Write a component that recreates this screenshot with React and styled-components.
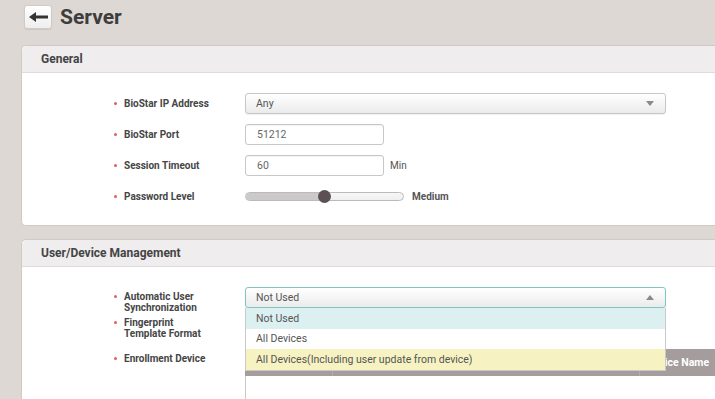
import React from "react";
import styled, { createGlobalStyle } from "styled-components";

const GlobalStyle = createGlobalStyle`
  html, body {
    margin: 0;
    overflow: hidden;
    background: #ddd8d4;
  }
  body {
    font-family: Roboto, "Liberation Sans", Arial, sans-serif;
    color: #444;
  }
`;

const Page = styled.div`
  width: 780px;
  padding: 5px 0 0 21px;
  box-sizing: border-box;
`;

const TitleBar = styled.div`
  display: flex;
  align-items: center;
  gap: 8px;
  height: 24px;
  padding-left: 3px;
  margin-bottom: 16px;
`;

const BackButton = styled.button`
  width: 28px;
  height: 24px;
  padding: 0;
  display: flex;
  align-items: center;
  justify-content: center;
  border: 1px solid #cfcbc8;
  border-radius: 3px;
  background: linear-gradient(#ffffff, #eeeeee);
  box-shadow: 0 1px 1px rgba(0, 0, 0, 0.08);
`;

const Title = styled.h1`
  margin: 0;
  font-size: 21px;
  font-weight: 700;
  color: #3d3d3d;
  line-height: 24px;
`;

const Panel = styled.section`
  background: #fff;
  border: 1px solid #cfcac7;
  border-right: none;
  border-radius: 5px 0 0 5px;
  margin-bottom: 13px;
`;

const PanelHeader = styled.div`
  height: 26px;
  padding-left: 19px;
  display: flex;
  align-items: center;
  background: #efedee;
  border-bottom: 1px solid #dedbda;
  border-radius: 5px 0 0 0;
  font-size: 12px;
  font-weight: 700;
  color: #444;
`;

const PanelBody = styled.div`
  padding: 20px 0 ${(p) => p.$bottom}px 92px;
  display: flex;
  flex-direction: column;
  gap: ${(p) => p.$gap}px;
`;

const Row = styled.div`
  display: grid;
  grid-template-columns: 131px auto;
  align-items: ${(p) => (p.$top ? "start" : "center")};
  margin-top: ${(p) => p.$space || 0}px;
`;

const Label = styled.div`
  display: flex;
  font-size: 10px;
  font-weight: 700;
  line-height: 11px;
  color: #454545;
  padding-top: ${(p) => (p.$top ? 4 : 0)}px;
`;

const LabelText = styled.span`
  white-space: ${(p) => (p.$wrap ? "normal" : "nowrap")};
  max-width: ${(p) => (p.$wrap ? "84px" : "none")};
`;

const Dot = styled.span`
  flex: none;
  width: 3px;
  height: 3px;
  border-radius: 50%;
  background: #e0605f;
  margin: 4px 7px 0 0;
`;

const Control = styled.div`
  display: flex;
  align-items: center;
  min-height: 21px;
  gap: ${(p) => p.$gap || 6}px;
  position: relative;
`;

const SelectBox = styled.div`
  width: 421px;
  height: 21px;
  box-sizing: border-box;
  display: flex;
  align-items: center;
  justify-content: space-between;
  padding: 0 11px 0 10px;
  border: 1px solid ${(p) => (p.$open ? "#80c6c0" : "#c9c7c6")};
  border-radius: 3px;
  background: linear-gradient(#ffffff, #ebebeb);
  box-shadow: 0 1px 1px rgba(0, 0, 0, 0.06);
  font-size: 10.5px;
  color: #555;
`;

const Caret = styled.span`
  width: 0;
  height: 0;
  border-left: 4px solid transparent;
  border-right: 4px solid transparent;
  ${(p) =>
    p.$up ? "border-bottom: 5px solid #8a8a8a;" : "border-top: 5px solid #8a8a8a;"}
`;

const TextInput = styled.div`
  width: 139px;
  height: 21px;
  box-sizing: border-box;
  display: flex;
  align-items: center;
  padding-left: 11px;
  border: 1px solid #c9c7c6;
  border-radius: 3px;
  background: #fff;
  box-shadow: inset 0 1px 1px rgba(0, 0, 0, 0.05);
  font-size: 10.5px;
  color: #666;
`;

const Unit = styled.span`
  font-size: 10px;
  color: #555;
  font-weight: ${(p) => (p.$bold ? 700 : 400)};
`;

const Track = styled.div`
  position: relative;
  width: 159px;
  height: 9px;
  box-sizing: border-box;
  border: 1px solid #bdbbba;
  border-radius: 5px;
  background: linear-gradient(#f7f7f7, #efefef);
`;

const TrackFill = styled.div`
  height: 100%;
  border-radius: 5px 0 0 5px;
  background: #cbc9c9;
`;

const Thumb = styled.span`
  position: absolute;
  top: 50%;
  width: 13px;
  height: 13px;
  margin: -6.5px 0 0 -6.5px;
  border-radius: 50%;
  background: #5b5055;
`;

const Menu = styled.ul`
  position: absolute;
  top: 21px;
  left: 0;
  width: 421px;
  box-sizing: border-box;
  margin: 0;
  padding: 0;
  list-style: none;
  background: #fff;
  border: 1px solid #cbc9c8;
  border-top: none;
  z-index: 5;
`;

const MenuItem = styled.li`
  height: 20.5px;
  display: flex;
  align-items: center;
  padding-left: 10px;
  font-size: 10.5px;
  color: #555;
  background: ${(p) => p.$bg || "#fff"};
`;

const Table = styled.div`
  width: 470px;
`;

const TableHead = styled.div`
  display: grid;
  grid-template-columns: 87px 307px auto;
  height: 27px;
  background: #a49c9d;
`;

const HeadCell = styled.div`
  display: flex;
  align-items: center;
  padding-left: 7px;
  font-size: 10.5px;
  font-weight: 700;
  color: #fff;
  white-space: nowrap;
  border-left: ${(p) => (p.$first ? "none" : "1px solid #b3acad")};
`;

const TableBody = styled.div`
  height: 40px;
  border-left: 1px solid #cbc9c8;
`;

function BackArrow() {
  return (
    <svg width="19" height="10" viewBox="0 0 19 10">
      <polygon points="0,5 7,0 7,10" fill="#333" />
      <rect x="6" y="3.5" width="13" height="3" fill="#333" />
    </svg>
  );
}

function Field({ label, top, space, children, gap }) {
  return (
    <Row $top={top} $space={space}>
      <Label $top={top}>
        <Dot />
        <LabelText $wrap={top}>{label}</LabelText>
      </Label>
      <Control $gap={gap}>{children}</Control>
    </Row>
  );
}

export default function App() {
  const level = 0.5;
  return (
    <>
      <GlobalStyle />
      <Page>
        <TitleBar>
          <BackButton>
            <BackArrow />
          </BackButton>
          <Title>Server</Title>
        </TitleBar>

        <Panel>
          <PanelHeader>General</PanelHeader>
          <PanelBody $gap={10} $bottom={18}>
            <Field label="BioStar IP Address">
              <SelectBox>
                <span>Any</span>
                <Caret />
              </SelectBox>
            </Field>
            <Field label="BioStar Port">
              <TextInput>51212</TextInput>
            </Field>
            <Field label="Session Timeout">
              <TextInput>60</TextInput>
              <Unit>Min</Unit>
            </Field>
            <Field label="Password Level" gap={8}>
              <Track>
                <TrackFill style={{ width: `${level * 100}%` }} />
                <Thumb style={{ left: `${level * 100}%` }} />
              </Track>
              <Unit $bold>Medium</Unit>
            </Field>
          </PanelBody>
        </Panel>

        <Panel>
          <PanelHeader>User/Device Management</PanelHeader>
          <PanelBody $gap={0} $bottom={20}>
            <Field label="Automatic User Synchronization" top>
              <SelectBox $open>
                <span>Not Used</span>
                <Caret $up />
              </SelectBox>
              <Menu>
                <MenuItem $bg="#dcf0f2">Not Used</MenuItem>
                <MenuItem>All Devices</MenuItem>
                <MenuItem $bg="#f7f2c2">
                  All Devices(Including user update from device)
                </MenuItem>
              </Menu>
            </Field>
            <Field label="Fingerprint Template Format" top>
              <SelectBox>
                <span />
                <Caret />
              </SelectBox>
            </Field>
            <Field label="Enrollment Device" top space={10}>
              <Table>
                <TableHead>
                  <HeadCell $first />
                  <HeadCell />
                  <HeadCell>Device Name</HeadCell>
                </TableHead>
                <TableBody />
              </Table>
            </Field>
          </PanelBody>
        </Panel>
      </Page>
    </>
  );
}
